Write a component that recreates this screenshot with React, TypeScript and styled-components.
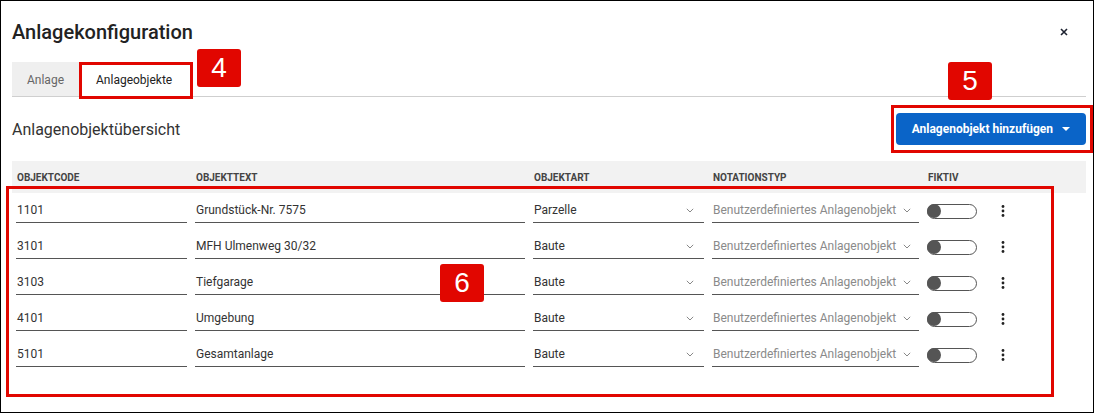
import styled, { createGlobalStyle } from "styled-components";

type Row = {
  code: string;
  text: string;
  art: string;
  notation: string;
};

const rows: Row[] = [
  { code: "1101", text: "Grundstück-Nr. 7575", art: "Parzelle", notation: "Benutzerdefiniertes Anlagenobjekt" },
  { code: "3101", text: "MFH Ulmenweg 30/32", art: "Baute", notation: "Benutzerdefiniertes Anlagenobjekt" },
  { code: "3103", text: "Tiefgarage", art: "Baute", notation: "Benutzerdefiniertes Anlagenobjekt" },
  { code: "4101", text: "Umgebung", art: "Baute", notation: "Benutzerdefiniertes Anlagenobjekt" },
  { code: "5101", text: "Gesamtanlage", art: "Baute", notation: "Benutzerdefiniertes Anlagenobjekt" },
];

const Chevron = () => (
  <svg width="8" height="5" viewBox="0 0 8 5">
    <polyline points="0.8,0.8 4,4 7.2,0.8" fill="none" stroke="#888" strokeWidth="1" />
  </svg>
);

const Kebab = () => (
  <svg width="4" height="12" viewBox="0 0 4 12">
    <circle cx="2" cy="1.5" r="1.4" fill="#222" />
    <circle cx="2" cy="6" r="1.4" fill="#222" />
    <circle cx="2" cy="10.5" r="1.4" fill="#222" />
  </svg>
);

const App = () => {
  return (
    <>
      <GlobalStyle />
      <Frame>
        <TitleBar>
          <Title>Anlagekonfiguration</Title>
          <CloseButton aria-label="Schliessen">
            <svg width="8" height="8" viewBox="0 0 8 8">
              <path d="M1 1 L7 7 M7 1 L1 7" stroke="#1d2230" strokeWidth="1.6" />
            </svg>
          </CloseButton>
        </TitleBar>

        <TabBar>
          <Tab>Anlage</Tab>
          <Tab active>Anlageobjekte</Tab>
        </TabBar>

        <SectionHeader>
          <Subtitle>Anlagenobjektübersicht</Subtitle>
          <AddButton>
            Anlagenobjekt hinzufügen
            <Caret />
          </AddButton>
        </SectionHeader>

        <HeaderRow>
          <HeadCell>Objektcode</HeadCell>
          <HeadCell>Objekttext</HeadCell>
          <HeadCell>Objektart</HeadCell>
          <HeadCell>Notationstyp</HeadCell>
          <HeadCell>Fiktiv</HeadCell>
          <span />
        </HeaderRow>

        {rows.map((row) => (
          <TableRow key={row.code}>
            <Field>{row.code}</Field>
            <Field>{row.text}</Field>
            <Field select>
              <span>{row.art}</span>
              <Chevron />
            </Field>
            <Field select muted>
              <span>{row.notation}</span>
              <Chevron />
            </Field>
            <Toggle>
              <Knob />
            </Toggle>
            <MenuButton>
              <Kebab />
            </MenuButton>
          </TableRow>
        ))}

        {/* callouts drawn over the screenshot */}
        <Highlight $x={78} $y={61} $w={114} $h={37} />
        <Badge $x={196} $y={48}>4</Badge>
        <Highlight $x={890} $y={104} $w={202} $h={48} />
        <Badge $x={947} $y={61}>5</Badge>
        <Highlight $x={5} $y={185} $w={1048} $h={211} />
        <Badge $x={439} $y={263}>6</Badge>
      </Frame>
    </>
  );
};

export default App;

const GlobalStyle = createGlobalStyle`
  html, body {
    margin: 0;
    padding: 0;
    background: #fff;
  }
  * {
    box-sizing: border-box;
  }
`;

const Frame = styled.div`
  position: relative;
  width: 1094px;
  height: 413px;
  border: 1px solid #000;
  background: #fff;
  padding: 0 7px 0 11px;
  font-family: Roboto, "Liberation Sans", Arial, sans-serif;
  color: #333;
  overflow: hidden;
`;

const TitleBar = styled.div`
  display: flex;
  align-items: center;
  justify-content: space-between;
  height: 24px;
  margin-top: 19px;
`;

const Title = styled.h1`
  margin: 0;
  font-size: 20px;
  line-height: 24px;
  font-weight: 500;
  color: #222;
`;

const CloseButton = styled.button`
  display: flex;
  align-items: center;
  justify-content: center;
  width: 20px;
  height: 20px;
  margin-right: 12px;
  padding: 0;
  border: none;
  background: transparent;
`;

const TabBar = styled.div`
  display: flex;
  margin-top: 18px;
  border-bottom: 1px solid #cfcfcf;
`;

const Tab = styled.div<{ active?: boolean }>`
  display: flex;
  align-items: center;
  height: 34px;
  padding: 0 ${({ active }) => (active ? "17px" : "15px")};
  font-size: 12px;
  color: ${({ active }) => (active ? "#222" : "#666")};
  background: ${({ active }) => (active ? "#fff" : "#efefef")};
  border-top: 2px solid ${({ active }) => (active ? "#1565c0" : "transparent")};
`;

const SectionHeader = styled.div`
  display: flex;
  align-items: center;
  justify-content: space-between;
  padding: 16px 0;
`;

const Subtitle = styled.h2`
  margin: 0;
  font-size: 16px;
  font-weight: 400;
  color: #333;
`;

const AddButton = styled.button`
  display: flex;
  align-items: center;
  gap: 9px;
  height: 32px;
  padding: 0 16px;
  border: none;
  border-radius: 4px;
  background: #0a64c8;
  color: #fff;
  font-family: Roboto, "Liberation Sans", Arial, sans-serif;
  font-size: 12px;
  font-weight: 700;
`;

const Caret = styled.span`
  width: 0;
  height: 0;
  border-left: 4px solid transparent;
  border-right: 4px solid transparent;
  border-top: 4px solid #fff;
`;

const columns = "171px 330px 171px 207px 50px 36px";

const HeaderRow = styled.div`
  display: grid;
  grid-template-columns: ${columns};
  column-gap: 8px;
  align-items: center;
  height: 32px;
  padding-left: 4px;
  background: #f2f2f2;
`;

const HeadCell = styled.div`
  padding-left: 1px;
  font-size: 10px;
  font-weight: 700;
  text-transform: uppercase;
  color: #444;
`;

const TableRow = styled.div`
  display: grid;
  grid-template-columns: ${columns};
  column-gap: 8px;
  align-items: center;
  height: 36px;
  padding-left: 4px;
`;

const Field = styled.div<{ select?: boolean; muted?: boolean }>`
  display: flex;
  align-items: center;
  justify-content: ${({ select }) => (select ? "space-between" : "flex-start")};
  align-self: start;
  height: 25px;
  margin-top: 5px;
  padding: 0 ${({ muted }) => (muted ? "8px" : "10px")} 0 1px;
  border-bottom: 1px solid #555;
  font-size: 12px;
  color: ${({ muted }) => (muted ? "#8a8a8a" : "#333")};
  white-space: nowrap;
`;

const Toggle = styled.div`
  position: relative;
  display: flex;
  align-items: center;
  width: 50px;
  height: 15px;
  border: 1px solid #555;
  border-radius: 8px;
  background: #fff;
`;

const Knob = styled.span`
  width: 14px;
  height: 14px;
  margin-left: -1px;
  border-radius: 50%;
  background: #555;
`;

const MenuButton = styled.div`
  display: flex;
  align-items: center;
  justify-content: center;
`;

const Highlight = styled.div<{ $x: number; $y: number; $w: number; $h: number }>`
  position: absolute;
  left: ${({ $x }) => $x}px;
  top: ${({ $y }) => $y}px;
  width: ${({ $w }) => $w}px;
  height: ${({ $h }) => $h}px;
  border: 3px solid #e10600;
  pointer-events: none;
`;

const Badge = styled.div<{ $x: number; $y: number }>`
  position: absolute;
  left: ${({ $x }) => $x}px;
  top: ${({ $y }) => $y}px;
  display: flex;
  align-items: center;
  justify-content: center;
  width: 44px;
  height: 38px;
  border-radius: 3px;
  background: #e10600;
  color: #fff;
  font-family: "Liberation Sans", Arial, sans-serif;
  font-size: 28px;
`;
